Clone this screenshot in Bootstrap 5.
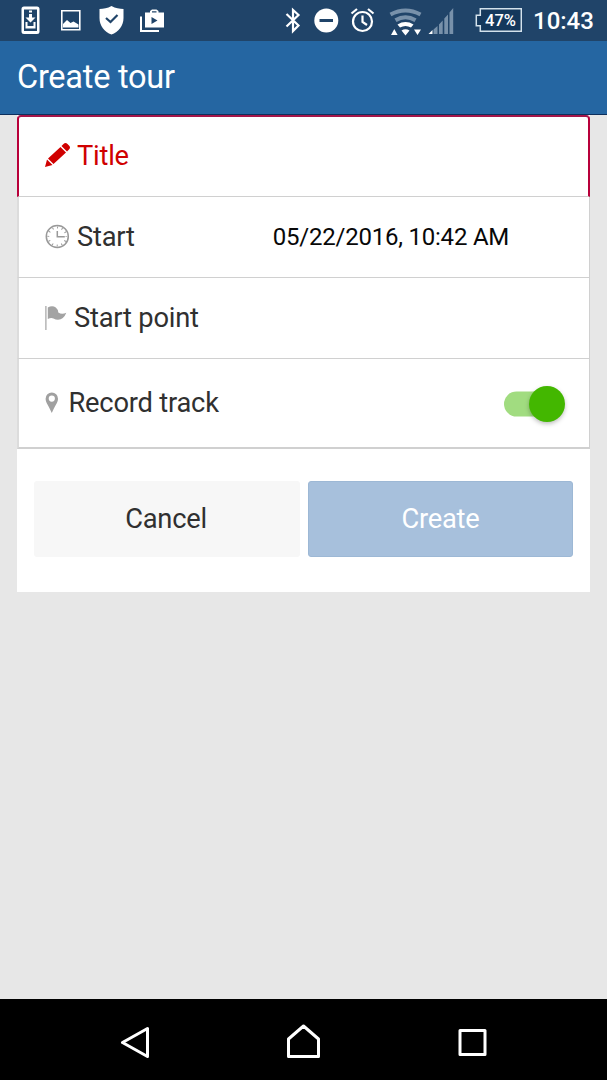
<!DOCTYPE html>
<html lang="en">
<head>
<meta charset="utf-8">
<meta name="viewport" content="width=device-width, initial-scale=1">
<title>Create tour</title>
<link href="https://cdn.jsdelivr.net/npm/bootstrap@5.3.0/dist/css/bootstrap.min.css" rel="stylesheet">
<style>
body{font-family:Roboto,"Noto Sans",sans-serif;background:#e7e7e7;height:1080px;overflow:hidden}
svg{display:block;flex:none}
.status{height:41px;background:#204469;color:#fff;font-weight:500}
.clock{font-size:24px;line-height:42px;width:59px;margin-left:11px;margin-right:15px;white-space:nowrap}
.title-bar{height:74px;background:#2566a2;border-bottom:1px solid #0c2f5c;padding-left:17px}
.title-bar h1{font-size:32.5px;line-height:73px;font-weight:400;color:#fff;letter-spacing:-.25px}
.sheet{margin:0 17px;height:477px;background:#fff}
.form-row{height:81px;border:0 solid #d0d0d0;border-width:0 1px 1px 2px;border-left-color:#dcdcdc;padding:0 24px 0 26px;font-size:27.3px;letter-spacing:-.22px;color:#303030}
.form-row.invalid{height:82px;border-radius:4px 4px 0 0;border:2px solid #b8003a;border-bottom:1px solid #d0d0d0;color:#d00000;background:#fff;border-top-color:#a4164a;padding:0 23px 0 25px}
.pencil{margin-bottom:3px}
.form-row.track{height:90px;border-bottom-width:2px}
.date{font-size:24px;letter-spacing:-.22px;color:#080808;margin-left:138px}
.toggle{width:61px;height:36px;margin-top:2px}
.actions{padding:32px 17px 0}
.actions .btn{height:76px;font-size:27.3px;letter-spacing:-.25px;border-radius:3px}
.btn-cancel,.btn-cancel:hover{width:266px;background:#f7f7f7;color:#303030;border:0;padding-right:14px}
.btn-create,.btn-create:disabled{width:265px;background:#a7c0dc;color:#fff;opacity:1;border:1px solid #9db8d5}
.soft-keys{height:81px;background:#000}
</style>
</head>
<body class="d-flex flex-column">
<div class="status d-flex align-items-start flex-shrink-0">
  <svg width="165" height="40" viewBox="0 0 165 40" fill="#fff">
    <path fill-rule="evenodd" d="M24 6.500h13a2.500 2.500 0 0 1 2.500 2.500v22.500a2.500 2.500 0 0 1-2.500 2.500H24a2.500 2.500 0 0 1-2.500-2.500V9A2.500 2.500 0 0 1 24 6.500zm0 3v21.500h13V9.500z"/>
    <path d="M29 10.500h3v2h-3zM29 14h3v3.500h3.500l-5 5-5-5H29zM25.500 22h2v4h6v-4h2v6.500h-10z"/>
    <path fill="none" stroke="#fff" stroke-width="1.600" d="M61.800 10.800h18v19h-18z"/>
    <path d="M63 27.500v-3.500l4-4 3.500 3 3-1.500 5 3v3z"/>
    <path d="M111.500 6c4 2.500 8 2.800 12 3v9c0 8-5 14-12 16.500-7-2.500-12-8.500-12-16.500V9c4-.2 8-.5 12-3z"/>
    <path fill="none" stroke="#204469" stroke-width="2.200" d="m106 18 4.500 4 7-7"/>
    <path fill-rule="evenodd" d="M145 12.500h5v-1.500l2-1.500h4.500l2 1.500v1.500h5.500v15h-19zm7 0h4.500v-1.300H152zM151.500 17v7l6-3.500z"/>
    <path fill="none" stroke="#fff" stroke-width="2" d="M141 16.500V31h18"/>
  </svg>
  <svg class="ms-auto" width="244" height="40" viewBox="278 0 244 40" fill="#fff">
    <path fill="none" stroke="#fff" stroke-width="2.200" d="m286.500 14 12 11.500-5.500 5.500V10l5.500 5-12 11.500"/>
    <circle cx="326.300" cy="20.500" r="12"/><path fill="#204469" d="M319.500 19h13.500v3h-13.500z"/>
    <g fill="none" stroke="#fff" stroke-width="2.200"><circle cx="362.500" cy="21.500" r="9.500"/><path d="M362.500 15.500v6.500l4.500 3M351.500 13.500l5.500-4.500M373.500 13.500l-5.500-4.500"/></g>
    <g fill="none" stroke="#7891aa" stroke-width="4"><path d="M390.500 14.500q15-8 30 0" /><path d="M395.500 20.300q10-6 20 0"/></g>
    <path d="M397.500 24.500q8-4.800 16 0l-2.500 3q-5.500-3-11 0zM401.500 30.500q4-2.500 8 0l-4 5zM391 35l3.300-6 3.300 6zM414 29.500h7l-3.500 5.500z"/>
    <path fill="#7891aa" d="M433.500 29.500l4-3.500v8h-4zM439 24.500l3.700-4v13.500h-3.700zM444.300 18.500l3.700-4v19.500h-3.700zM449.500 12.500l3.700-4.500v26h-3.700z"/>
    <path d="M428.500 34l4-4v4z"/>
    <path fill="#14385c" stroke="#d4e2ec" stroke-width="1.500" d="M480.300 8.800h41v22.400h-41v-5.500h-4v-10.500h4z"/>
    <text x="485" y="26" font-size="17" font-weight="500" textLength="31" lengthAdjust="spacingAndGlyphs">47%</text>
  </svg>
  <span class="clock">10:43</span>
</div>
<header class="title-bar flex-shrink-0"><h1 class="m-0">Create tour</h1></header>
<main class="flex-grow-1">
  <form class="sheet">
    <div class="form-row invalid d-flex align-items-center">
      <svg class="pencil" width="33" height="28" viewBox="0 0 33 28" fill="#d00000"><path d="M1 26 3 18.500 8.500 24zM4 17.500 16.500 6l5.500 5.500L9.500 23zM17.500 5l2-2q2-2 4 0l1.500 1.500q2 2 0 4l-2 2z"/></svg>
      <span>Title</span>
    </div>
    <div class="form-row d-flex align-items-center">
      <svg width="32" height="26" viewBox="0 0 32 26" fill="none" stroke="#999"><circle cx="12.300" cy="12.500" r="11" stroke-width="1.500"/><circle cx="12.300" cy="12.500" r="9" stroke-width="2" stroke-dasharray="1 3.712" stroke-dashoffset=".5"/><path stroke-width="1.500" d="M12.300 7v5.700h7.500"/></svg>
      <span>Start</span>
      <span class="date">05/22/2016, 10:42 AM</span>
    </div>
    <div class="form-row d-flex align-items-center">
      <svg width="29" height="26" viewBox="0 0 29 26" fill="#a3a3a3"><path d="M.3 1h1.200v24H.3zM2.800 2.500q4.500-2.500 8 0 2 1.500 2.500 5 3.500 2.500 8 .3-2.500 6.700-8.300 7-2.500 0-4.500-1.300-2.500-1-5.700.5z"/></svg>
      <span>Start point</span>
    </div>
    <div class="form-row track d-flex align-items-center">
      <svg width="23.500" height="24" viewBox="0 0 23.500 24" fill="#a0a0a0"><path fill-rule="evenodd" d="M6.800 1.500a6.200 6.200 0 0 1 6.200 6.200c0 4-3.500 7.500-6.200 14.300C4 15.200.6 11.700.6 7.700a6.200 6.200 0 0 1 6.200-6.200zm0 3a3 3 0 1 0 0 6.200 3 3 0 0 0 0-6.200z"/></svg>
      <span>Record track</span>
      <svg class="toggle ms-auto overflow-visible" viewBox="0 0 61 36" role="switch" aria-checked="true" aria-label="Record track">
        <rect y="5.500" width="56" height="25" rx="12.500" fill="#a1dc80"/>
        <circle cx="43" cy="18" r="18" fill="#43b700" style="filter:drop-shadow(0 2px 2px rgba(0,0,0,.25))"/>
      </svg>
    </div>
    <div class="actions d-flex justify-content-between">
      <button type="button" class="btn btn-cancel">Cancel</button>
      <button type="button" class="btn btn-create" disabled>Create</button>
    </div>
  </form>
</main>
<nav class="soft-keys flex-shrink-0">
  <svg width="607" height="81" viewBox="0 999 607 81" fill="none" stroke="#fff" stroke-width="3" stroke-linejoin="round"><path d="M147.500 1028.500v28L122.500 1042.500zM288.500 1056.500v-17.500l15-13 15 13v17.500zM460 1030.500h25v24h-25z"/></svg>
</nav>
<script src="https://cdn.jsdelivr.net/npm/bootstrap@5.3.0/dist/js/bootstrap.bundle.min.js"></script>
</body>
</html>
